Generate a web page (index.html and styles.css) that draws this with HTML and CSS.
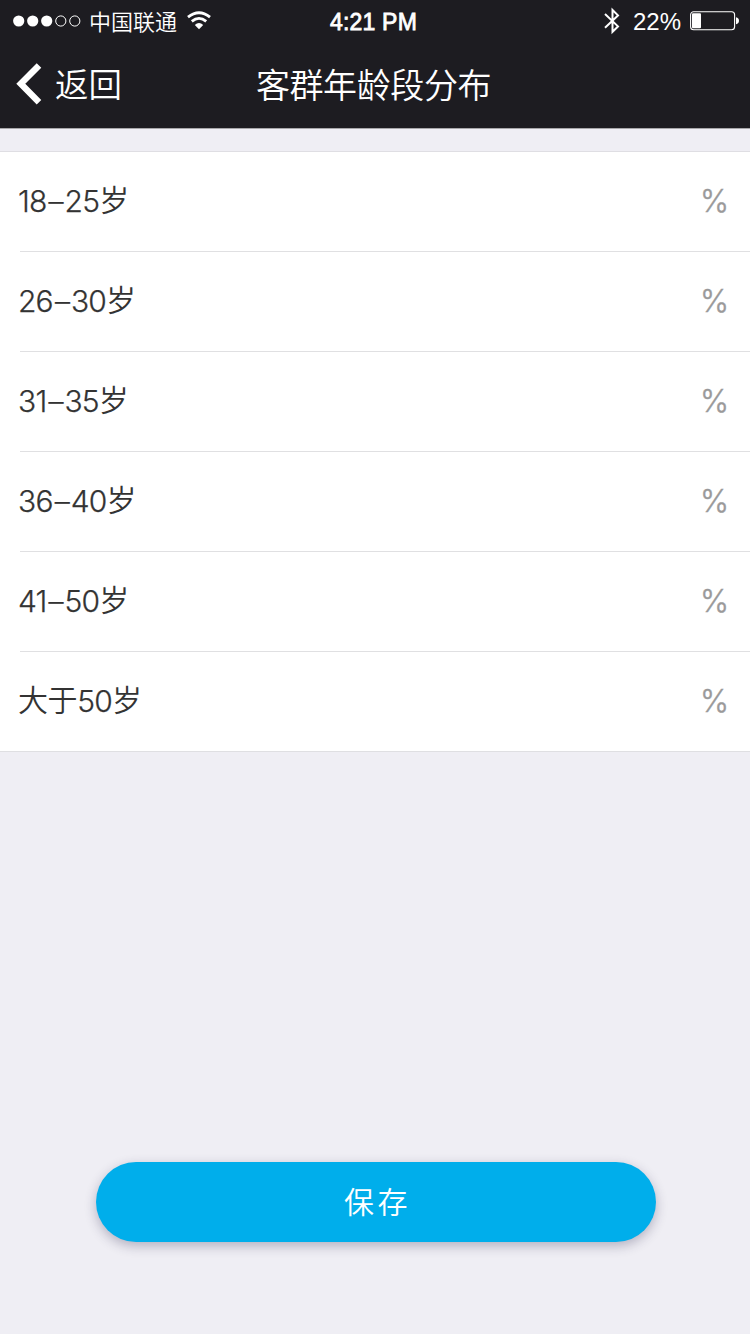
FILE: index.html
```html
<!DOCTYPE html>
<html lang="zh-CN">
<head>
<meta charset="utf-8">
<title>客群年龄段分布</title>
<link rel="stylesheet" href="styles.css">
</head>
<body>
<div class="screen">
  <header class="header">
    <div class="status">
      <div class="status-left">
        <svg class="signal" width="68" height="12" viewBox="0 0 68 12">
          <g fill="#fff"><circle cx="5.7" cy="6" r="5.6"/><circle cx="19.7" cy="6" r="5.6"/><circle cx="33.7" cy="6" r="5.6"/></g>
          <g fill="none" stroke="#fff"><circle cx="47.8" cy="6" r="5.1"/><circle cx="61.8" cy="6" r="5.1"/></g>
        </svg>
        <span class="carrier">中国联通</span>
        <svg class="wifi" width="24" height="20" viewBox="0 0 24 20">
          <g fill="none" stroke="#fff" stroke-width="2.8"><path d="M1 6.2Q12-2.8 23 6.2"/><path d="M4.8 10.4Q12 4.4 19.2 10.4"/></g>
          <path fill="#fff" d="M7.8 14Q12 10.2 16.2 14L12 18.2Z"/>
        </svg>
      </div>
      <span class="clock">4:21 PM</span>
      <div class="status-right">
        <svg class="bluetooth" width="16" height="28" viewBox="0 0 16 28">
          <path fill="none" stroke="#fff" stroke-width="2" d="M1 7L14 19.4L8.5 24.8V3L14 8.4L1 20.8"/>
        </svg>
        <span class="charge">22%</span>
        <svg class="battery" width="49" height="20" viewBox="0 0 49 20">
          <rect x=".6" y=".8" width="44" height="18" rx="3" fill="none" stroke="#fff" stroke-width="1.1"/>
          <rect x="2" y="2.3" width="9" height="15" rx="1" fill="#fff"/>
          <path fill="#fff" d="M46 6.3Q49 7 49 9.8T46 13.3Z"/>
        </svg>
      </div>
    </div>
    <nav class="nav">
      <a class="back">
        <svg class="chevron" width="26" height="42" viewBox="0 0 26 42"><path fill="none" stroke="#fff" stroke-width="6.4" d="M23 2.4L4.8 20.8L23 39.2"/></svg>
        <span class="back-text">返回</span>
      </a>
      <h1 class="title">客群年龄段分布</h1>
    </nav>
  </header>
  <main class="content">
    <ul class="list">
      <li class="row"><span class="label">18<span class="dash">–</span>25<span class="han">岁</span></span><span class="unit">%</span></li>
      <li class="row"><span class="label">26<span class="dash">–</span>30<span class="han">岁</span></span><span class="unit">%</span></li>
      <li class="row"><span class="label">31<span class="dash">–</span>35<span class="han">岁</span></span><span class="unit">%</span></li>
      <li class="row"><span class="label">36<span class="dash">–</span>40<span class="han">岁</span></span><span class="unit">%</span></li>
      <li class="row"><span class="label">41<span class="dash">–</span>50<span class="han">岁</span></span><span class="unit">%</span></li>
      <li class="row"><span class="label"><span class="han">大于</span>50<span class="han">岁</span></span><span class="unit">%</span></li>
    </ul>
  </main>
  <footer class="footer"><button class="save">保存</button></footer>
</div>
</body>
</html>
```
FILE: styles.css
```css
* { box-sizing: border-box; }
body {
  margin: 0;
  background: #efeef4;
  font-family: Inter, "Noto Sans CJK SC", sans-serif;
}
.screen { width: 750px; height: 1334px; display: flex; flex-direction: column; }
.header {
  height: 129px;
  background: #1d1c21;
  border-bottom: 1px solid #a8a7aa;
  color: #fff;
}
.status {
  display: grid;
  grid-template-columns: 1fr auto 1fr;
  height: 40px;
  padding: 0 11px 0 13px;
  align-items: center;
}
.status-left, .status-right { display: flex; align-items: center; }
.status-right { justify-content: flex-end; }
.carrier { margin-left: 8px; font-size: 22px; line-height: 40px; padding-top: 2px; font-weight: 350; }
.wifi { margin-left: 10px; }
.clock { font: 400 23px/40px "Liberation Sans", sans-serif; -webkit-text-stroke: 0.8px #fff; letter-spacing: 0.2px; padding: 1px 5px 0 0; }
.bluetooth { margin-right: 13px; }
.charge { margin-right: 9px; font: 24px/40px "Liberation Sans", sans-serif; padding-top: 1px; }
.nav {
  display: grid;
  grid-template-columns: 1fr auto 1fr;
  align-items: center;
  height: 88px;
  padding: 0 18px 0 16px;
}
.back { display: flex; align-items: center; font-size: 33.5px; line-height: 48px; font-weight: 350; }
.back-text { padding-top: 2px; }
.chevron { margin-right: 13px; }
.title { margin: 0; padding: 3px 1px 0 0; font-size: 34px; line-height: 48px; font-weight: 350; letter-spacing: -0.4px; }
.content { padding-top: 22px; }
.list {
  margin: 0;
  padding: 0 0 0 20px;
  list-style: none;
  background: #fff;
  border-top: 1px solid #dfdee3;
  border-bottom: 1px solid #dfdfe2;
}
.row {
  height: 100px;
  display: flex;
  align-items: center;
  justify-content: space-between;
  padding: 0 21px 2px 0;
  border-bottom: 1px solid #e0e0e2;
  font-size: 30px;
  line-height: 44px;
  font-weight: 350;
  color: #333;
}
.row:last-child { height: 99px; border-bottom: 0; }
.label { margin-left: -2px; letter-spacing: -0.8px; -webkit-text-stroke: 0.25px #333; }
.dash { margin: 0 1.8px 0 2px; }
.han { vertical-align: 1px; line-height: 1; letter-spacing: -0.4px; -webkit-text-stroke: 0; }
.unit { color: #999; font-size: 31px; -webkit-text-stroke: 0.4px #999; }
.footer { margin-top: auto; padding: 0 94px 92px 96px; }
.save {
  display: block;
  width: 560px;
  height: 80px;
  padding: 0 0 3px 3px;
  border: 0;
  border-radius: 40px;
  background: #00aeeb;
  box-shadow: 0 4px 12px rgba(40, 35, 75, 0.3);
  color: #fff;
  font: 350 30px/77px "Noto Sans CJK SC", sans-serif;
  letter-spacing: 3.5px;
}
```
